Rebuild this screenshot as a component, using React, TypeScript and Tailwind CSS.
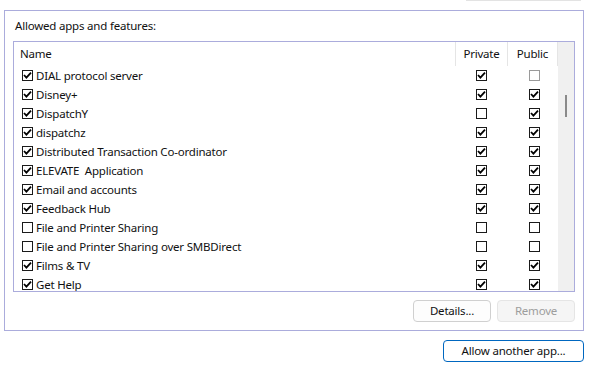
import React from "react";

type Row = { name: string; priv: boolean; pub: boolean; pubDim?: boolean; on: boolean };

const rows: Row[] = [
  { name: "DIAL protocol server", on: true, priv: true, pub: false, pubDim: true },
  { name: "Disney+", on: true, priv: true, pub: true },
  { name: "DispatchY", on: true, priv: false, pub: true },
  { name: "dispatchz", on: true, priv: true, pub: true },
  { name: "Distributed Transaction Co-ordinator", on: true, priv: true, pub: true },
  { name: "ELEVATE\u00a0 Application", on: true, priv: true, pub: true },
  { name: "Email and accounts", on: true, priv: true, pub: true },
  { name: "Feedback Hub", on: true, priv: true, pub: true },
  { name: "File and Printer Sharing", on: false, priv: false, pub: false },
  { name: "File and Printer Sharing over SMBDirect", on: false, priv: false, pub: false },
  { name: "Films & TV", on: true, priv: true, pub: true },
  { name: "Get Help", on: true, priv: true, pub: true },
];

function Box({ checked, dim }: { checked: boolean; dim?: boolean }) {
  return (
    <div
      className={`w-[11px] h-[11px] border bg-white flex items-center justify-center shrink-0 ${
        dim ? "border-[#9a9a9a]" : "border-[#1a1a1a]"
      }`}
    >
      {checked && (
        <svg width="9" height="9" viewBox="0 0 9 9">
          <path d="M1 4 L3.4 6.6 L8 1.6" stroke="#000" strokeWidth="1.8" fill="none" strokeLinejoin="miter" />
        </svg>
      )}
    </div>
  );
}

export default function App() {
  return (
    <div className="w-[601px] h-[372px] bg-white overflow-hidden text-[11.5px] tracking-[-0.2px] text-[#111] leading-none font-['Noto_Sans',sans-serif]">
      {/* bottom edge of the button above */}
      <div className="ml-[466px] w-[115px] h-[1px] bg-[#e3e3e3]" />

      {/* group box */}
      <div className="ml-[4px] mt-[9px] w-[580px] h-[321px] border border-[#abacdc] flex flex-col">
        <div className="pl-[10px] pt-[9px] h-[30px]">Allowed apps and features:</div>

        <div className="ml-[8px] w-[562px] h-[251px] border border-[#abacdc] flex">
          <div className="flex-1 flex flex-col overflow-hidden">
            {/* header */}
            <div className="h-[24px] flex items-center shrink-0">
              <div className="flex-1 pl-[6px]">Name</div>
              <div className="w-[52px] h-full border-l border-[#e5e5e5] flex items-center justify-center">Private</div>
              <div className="w-[51px] h-full border-l border-r border-[#e5e5e5] flex items-center justify-center">Public</div>
            </div>
            {rows.map((r) => (
              <div key={r.name} className="h-[19px] flex items-center shrink-0">
                <div className="flex-1 flex items-center pl-[8px] gap-[3px] whitespace-nowrap">
                  <Box checked={r.on} />
                  <span>{r.name}</span>
                </div>
                <div className="w-[52px] pl-[21px]">
                  <Box checked={r.priv} />
                </div>
                <div className="w-[51px] pl-[22px]">
                  <Box checked={r.pub} dim={r.pubDim} />
                </div>
              </div>
            ))}
          </div>
          {/* scrollbar */}
          <div className="w-[16px] bg-[#f0f0f0] shrink-0 pt-[53px] pl-[7px]">
            <div className="w-[2px] h-[22px] bg-[#8a8a8a]" />
          </div>
        </div>

        <div className="flex justify-end gap-[6px] mt-[8px] mr-[8px]">
          <button className="w-[78px] h-[22px] rounded-[4px] border border-[#d0d0d0] bg-[#fdfdfd] leading-none">
            Details...
          </button>
          <button className="w-[78px] h-[22px] rounded-[4px] border border-[#e5e5e5] bg-[#f5f5f5] text-[#9d9d9d] leading-none">
            Remove
          </button>
        </div>
      </div>

      <div className="flex justify-end mt-[9px] mr-[17px]">
        <button className="w-[141px] h-[22px] rounded-[4px] border border-[#0067c0] bg-white leading-none">
          Allow another app...
        </button>
      </div>
    </div>
  );
}
